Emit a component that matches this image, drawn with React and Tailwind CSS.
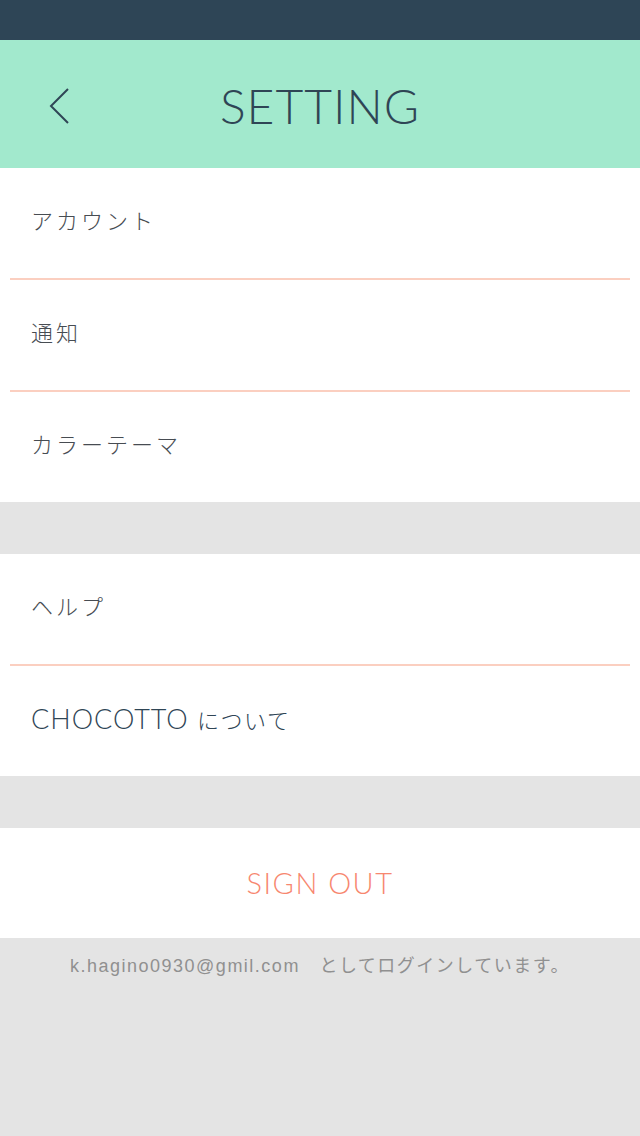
import React from 'react';

const Divider = () => <div className="mx-[10px] h-[2px] bg-[#fbcfc0]" />;

const Row = ({ children, latin }) => (
    <div className={`h-[110px] flex items-center px-[31px] ${latin ? 'pb-[4px]' : 'pb-[8px]'}`}>
        {latin ? (
            <span className="text-[27px] font-light text-[#2f4555] tracking-[1px]" style={{ fontFamily: 'Lato, "Noto Sans CJK JP", sans-serif' }}>
                {children}
            </span>
        ) : (
            <span className="text-[22px] font-light text-[#474c52] tracking-[3px]" style={{ fontFamily: '"Noto Sans CJK JP", sans-serif' }}>
                {children}
            </span>
        )}
    </div>
);

const App = () => {
    return (
        <div className="w-[640px] h-[1136px] bg-[#e4e4e4] flex flex-col" style={{ fontFamily: 'Lato, "Noto Sans CJK JP", sans-serif' }}>
            <div className="h-[40px] bg-[#2e4556]" />

            <div className="h-[128px] bg-[#a2e9cd] relative flex items-center justify-center">
                <svg className="absolute left-[46px] top-[47px]" width="26" height="38" viewBox="0 0 26 38">
                    <polyline points="22,2 5,19 22,36" fill="none" stroke="#2f4555" strokeWidth="2" />
                </svg>
                <h1 className="text-[48px] font-light text-[#2f4555] tracking-[1px] leading-none pt-[4px]">SETTING</h1>
            </div>

            <div className="bg-white">
                <Row>アカウント</Row>
                <Divider />
                <Row>通知</Row>
                <Divider />
                <Row>カラーテーマ</Row>
            </div>

            <div className="h-[52px]" />

            <div className="bg-white">
                <Row>ヘルプ</Row>
                <Divider />
                <Row latin>
                    CHOCOTTO <span style={{ fontFamily: '"Noto Sans CJK JP", sans-serif' }} className="text-[22px] tracking-[1.5px]">について</span>
                </Row>
            </div>

            <div className="h-[52px]" />

            <div className="bg-white h-[110px] flex items-center justify-center">
                <span className="text-[29px] font-light text-[#f7876f] tracking-[1.5px]">SIGN OUT</span>
            </div>

            <div className="pt-[15px] text-center text-[18px] text-[#909090] tracking-[1.5px]" style={{ fontFamily: '"Liberation Sans", "Noto Sans CJK JP", sans-serif' }}>
                k.hagino0930@gmil.com　としてログインしています。
            </div>
        </div>
    );
};

export default App;
